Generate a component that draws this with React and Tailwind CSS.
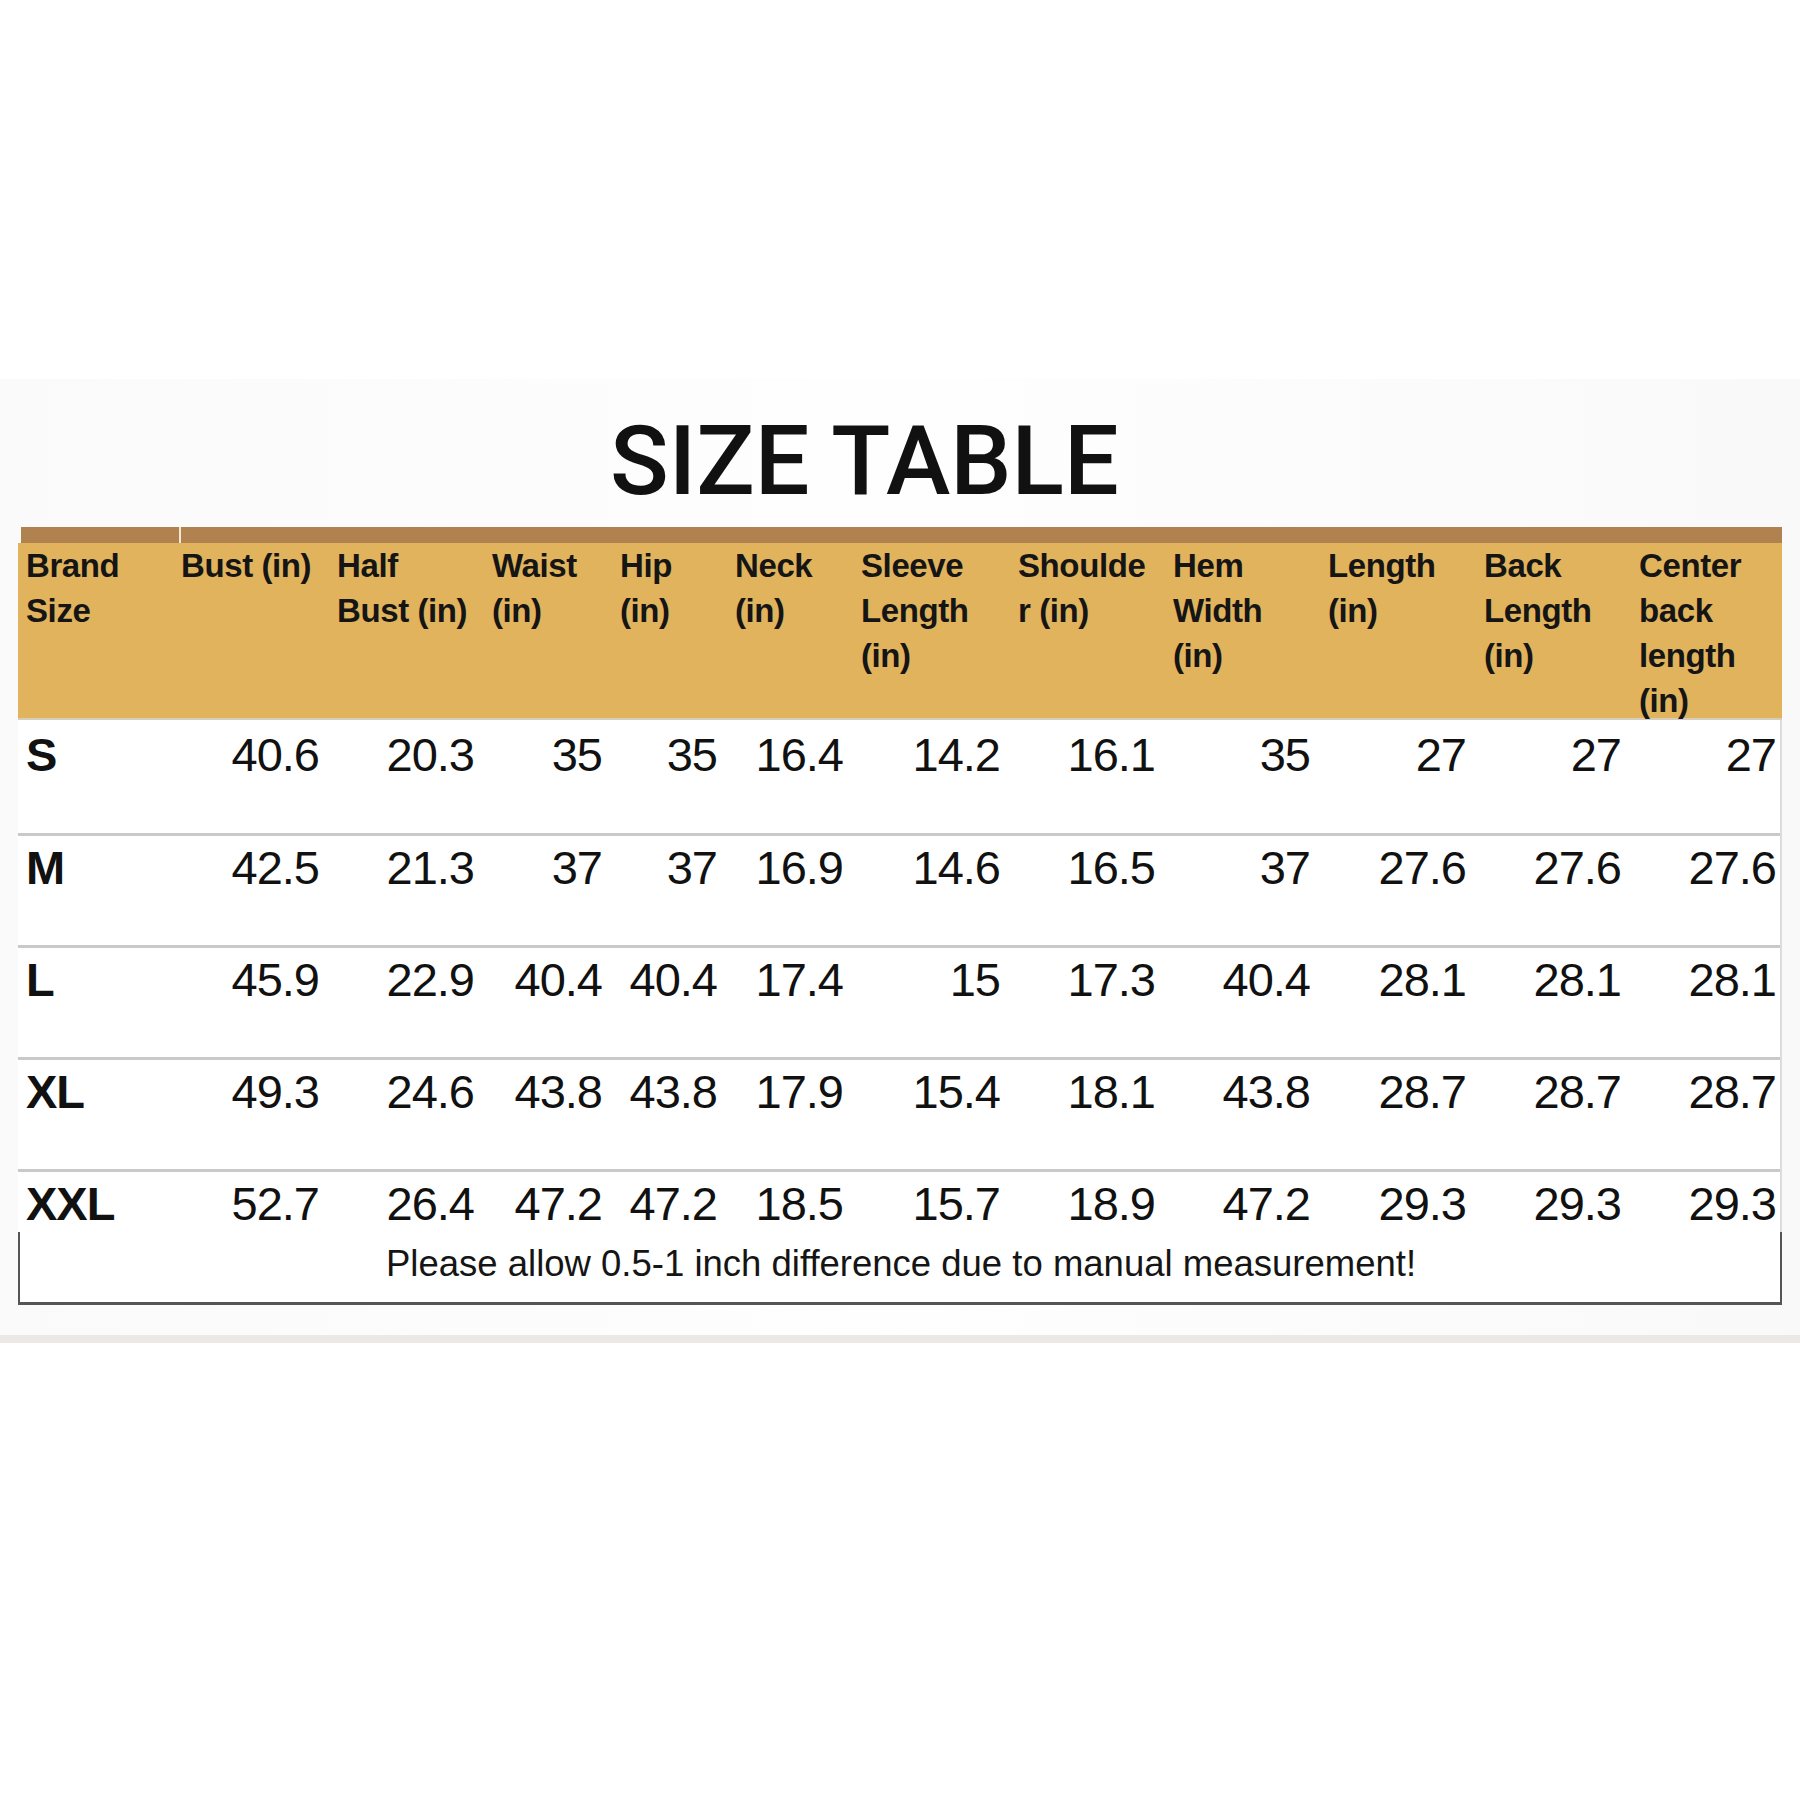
import React from "react";

const headers = [
  ["Brand", "Size"],
  ["Bust (in)"],
  ["Half", "Bust (in)"],
  ["Waist", "(in)"],
  ["Hip", "(in)"],
  ["Neck", "(in)"],
  ["Sleeve", "Length", "(in)"],
  ["Shoulde", "r (in)"],
  ["Hem", "Width", "(in)"],
  ["Length", "(in)"],
  ["Back", "Length", "(in)"],
  ["Center", "back", "length", "(in)"],
];

const rows = [
  ["S", "40.6", "20.3", "35", "35", "16.4", "14.2", "16.1", "35", "27", "27", "27"],
  ["M", "42.5", "21.3", "37", "37", "16.9", "14.6", "16.5", "37", "27.6", "27.6", "27.6"],
  ["L", "45.9", "22.9", "40.4", "40.4", "17.4", "15", "17.3", "40.4", "28.1", "28.1", "28.1"],
  ["XL", "49.3", "24.6", "43.8", "43.8", "17.9", "15.4", "18.1", "43.8", "28.7", "28.7", "28.7"],
  ["XXL", "52.7", "26.4", "47.2", "47.2", "18.5", "15.7", "18.9", "47.2", "29.3", "29.3", "29.3"],
];

const gridCols =
  "grid grid-cols-[155px_156px_155px_128px_115px_126px_157px_155px_155px_156px_155px_1fr]";

function DataRow({ row, first, last }) {
  const h = first ? "h-[113px] pt-[11px]" : last ? "h-[63px] pt-[8px] border-t-[3px] border-[#c9c9c9]" : "h-[112px] pt-[8px] border-t-[3px] border-[#c9c9c9]";
  return (
    <div className={`${gridCols} pl-[8px] items-start ${h}`}>
      {row.map((v, i) =>
        i === 0 ? (
          <div key={i} className="text-[47px] leading-[47px] font-bold tracking-[-1px] text-[#111]">
            {v}
          </div>
        ) : (
          <div
            key={i}
            className={`text-right text-[47px] leading-[47px] tracking-[-1px] text-[#111] ${i === 11 ? "pr-[4px]" : "pr-[18px]"}`}
          >
            {v}
          </div>
        )
      )}
    </div>
  );
}

export default function App() {
  return (
    <div className="w-[1800px] h-[1800px] bg-white flex flex-col" style={{ fontFamily: '"Liberation Sans", Arial, sans-serif' }}>
      <div className="h-[379px] shrink-0" />
      <div className="h-[964px] shrink-0 bg-gradient-to-r from-[#fafafa] via-[#fefefe] to-[#f9f9f9] flex flex-col px-[18px] border-b-[8px] border-[#ece8e3]">
        <div className="pt-[33px] pl-[592px] h-[131px]">
          <div
            className="text-[97px] leading-[98px] font-medium text-[#111] whitespace-nowrap"
            style={{ fontFamily: 'Roboto, "Liberation Sans", sans-serif' }}
          >
            SIZE TABLE
          </div>
        </div>
        <div className="flex flex-col w-[1764px] mt-[17px]">
          <div className="flex h-[16px]">
            <div className="ml-[3px] w-[158px] bg-[#b08250]" />
            <div className="w-[2px] bg-[#f3e6d2]" />
            <div className="flex-1 bg-[#b08250]" />
          </div>
          <div className={`${gridCols} pl-[8px] h-[177px] bg-[#e0b35c] border-b-2 border-[#d6cdbd]`}>
            {headers.map((lines, i) => (
              <div
                key={i}
                className="text-[33px] leading-[45px] font-bold tracking-[-0.4px] text-[#151515] whitespace-nowrap"
              >
                {lines.map((l, j) => (
                  <div key={j}>{l}</div>
                ))}
              </div>
            ))}
          </div>
          <div className="bg-white border-r-2 border-[#dcdcdc]">
            {rows.map((r, i) => (
              <DataRow key={i} row={r} first={i === 0} last={i === rows.length - 1} />
            ))}
          </div>
          <div className="h-[73px] bg-white border-l-2 border-b-[3px] border-r-2 border-[#555] pl-[366px] pt-[14px]">
            <div className="text-[36.5px] leading-[36px] text-[#151515] whitespace-nowrap">
              Please allow 0.5-1 inch difference due to manual measurement!
            </div>
          </div>
        </div>
      </div>
      <div className="flex-1 bg-white" />
    </div>
  );
}
